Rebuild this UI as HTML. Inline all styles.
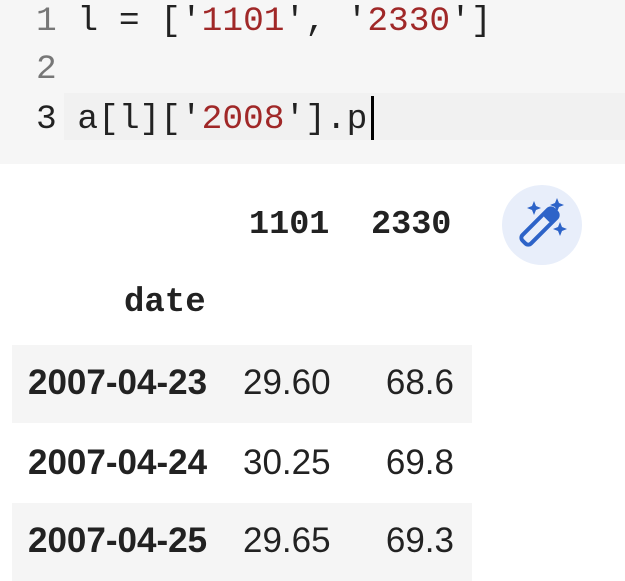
<!DOCTYPE html>
<html><head><style>
body{margin:0;width:625px;height:553px;background:#fff;overflow:hidden;position:relative;font-family:"Liberation Sans",sans-serif}
.code{position:absolute;left:0;top:0;width:625px;height:164px;background:#f6f6f6}
.hl{position:absolute;left:64px;top:93px;width:561px;height:47px;background:#f1f1f1}
.ln{position:absolute;font-family:"Liberation Mono",monospace;font-size:34.5px;color:#222;white-space:pre;line-height:40px}
.n{color:#777}
.s{color:#a02828}
.cur{position:absolute;left:371px;top:96px;width:3px;height:44px;background:#000}
.t{position:absolute;font-size:35px;color:#222;line-height:40px;white-space:nowrap}
.b{font-weight:bold}
.stripe{position:absolute;left:12px;width:460px;height:78px;background:#f5f5f5}
.mono{font-family:"Liberation Mono",monospace}
.r{text-align:right;width:120px}
</style></head><body>
<div class="code"><div class="hl"></div>
<div class="ln" style="left:36px;top:2px"><span class="n">1</span> l = ['<span class="s">1101</span>', '<span class="s">2330</span>']</div>
<div class="ln" style="left:36px;top:50px"><span class="n">2</span></div>
<div class="ln" style="left:36px;top:100px">3 a[l]['<span class="s">2008</span>'].p</div>
<div class="cur"></div>
</div>
<div class="t b mono" style="left:249px;top:205px;font-size:33.5px">1101</div>
<div class="t b mono" style="left:371px;top:205px;font-size:33.5px">2330</div>
<div class="t b mono" style="left:124px;top:283px;font-size:34px">date</div>
<div class="stripe" style="top:345px"></div>
<div class="stripe" style="top:503px"></div>
<div class="t b" style="left:28px;top:363px">2007-04-23</div><div class="t" style="left:243px;top:363px">29.60</div><div class="t r" style="left:334px;top:363px">68.6</div>
<div class="t b" style="left:28px;top:443px">2007-04-24</div><div class="t" style="left:243px;top:443px">30.25</div><div class="t r" style="left:334px;top:443px">69.8</div>
<div class="t b" style="left:28px;top:521px">2007-04-25</div><div class="t" style="left:243px;top:521px">29.65</div><div class="t r" style="left:334px;top:521px">69.3</div>
<svg style="position:absolute;left:502px;top:185px" width="80" height="80" viewBox="0 0 80 80">
<circle cx="40" cy="40" r="40" fill="#e8eefa"/>
<g fill="#2d63c8">
<path d="M32 16 l2 5 5 2 -5 2 -2 5 -2 -5 -5 -2 5 -2z"/>
<path d="M55 13 l2 5 5 2 -5 2 -2 5 -2 -5 -5 -2 5 -2z"/>
<path d="M58 37 l2 5 5 2 -5 2 -2 5 -2 -5 -5 -2 5 -2z"/>
</g>
<g transform="rotate(45 34 45)">
<rect x="28" y="18" width="12" height="44" rx="4" fill="none" stroke="#2d63c8" stroke-width="4"/>
<rect x="28" y="18" width="12" height="12" rx="3" fill="#2d63c8"/>
</g>
</svg>
</body></html>
